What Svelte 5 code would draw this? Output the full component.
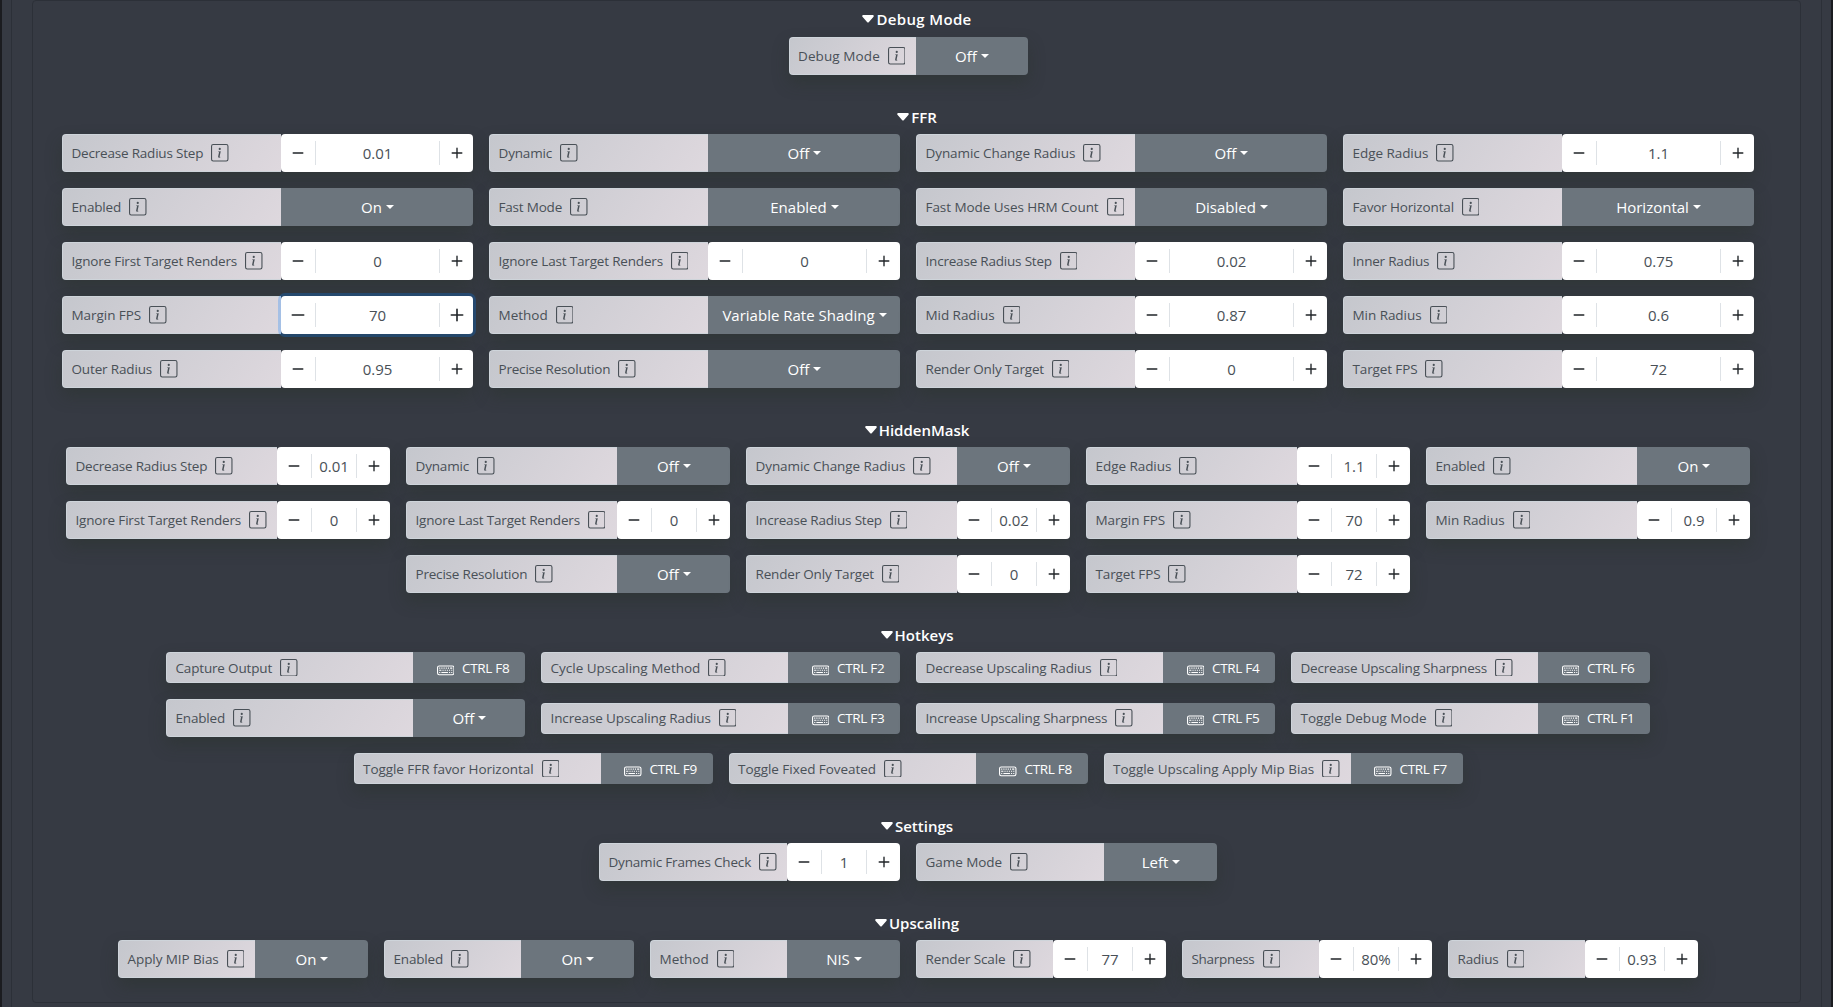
<script>
  const off = (label) => ({ label, kind: 'select', value: 'Off' });
  const select = (label, value) => ({ label, kind: 'select', value });
  const num = (label, value) => ({ label, kind: 'spin', value });
  const key = (label, value) => ({ label, kind: 'key', value });

  // Letter spacing per label, in pixels
  const tracking = {
    'Debug Mode': 0.1,
    'Decrease Radius Step': -0.2,
    'Dynamic': -0.17,
    'Dynamic Change Radius': -0.08,
    'Edge Radius': -0.05,
    'Enabled': -0.17,
    'Fast Mode': -0.2,
    'Fast Mode Uses HRM Count': -0.06,
    'Favor Horizontal': -0.15,
    'Ignore First Target Renders': -0.18,
    'Ignore Last Target Renders': -0.18,
    'Increase Radius Step': -0.2,
    'Inner Radius': -0.2,
    'Margin FPS': -0.05,
    'Mid Radius': -0.05,
    'Min Radius': -0.05,
    'Outer Radius': -0.15,
    'Precise Resolution': -0.2,
    'Render Only Target': -0.18,
    'Target FPS': -0.12,
    'Capture Output': -0.17,
    'Decrease Upscaling Radius': -0.1,
    'Decrease Upscaling Sharpness': -0.2,
    'Increase Upscaling Radius': -0.12,
    'Increase Upscaling Sharpness': -0.18,
    'Toggle Debug Mode': 0.03,
    'Toggle FFR favor Horizontal': -0.05,
    'Toggle Fixed Foveated': -0.05,
    'Dynamic Frames Check': -0.18,
    'Game Mode': -0.05,
    'Apply MIP Bias': -0.08,
    'Render Scale': -0.12,
    'Sharpness': -0.3,
    'Radius': -0.2
  };

  const sections = [
    { title: 'Debug Mode', titleTracking: 0.35, labelWidth: 127, controlWidth: 112, rows: [[off('Debug Mode')]] },
    {
      title: 'FFR', labelWidth: 219, controlWidth: 192,
      rows: [
        [num('Decrease Radius Step', '0.01'), off('Dynamic'), off('Dynamic Change Radius'), num('Edge Radius', '1.1')],
        [select('Enabled', 'On'), select('Fast Mode', 'Enabled'), select('Fast Mode Uses HRM Count', 'Disabled'), select('Favor Horizontal', 'Horizontal')],
        [num('Ignore First Target Renders', '0'), num('Ignore Last Target Renders', '0'), num('Increase Radius Step', '0.02'), num('Inner Radius', '0.75')],
        [{ ...num('Margin FPS', '70'), focused: true }, select('Method', 'Variable Rate Shading'), num('Mid Radius', '0.87'), num('Min Radius', '0.6')],
        [num('Outer Radius', '0.95'), off('Precise Resolution'), num('Render Only Target', '0'), num('Target FPS', '72')]
      ]
    },
    {
      title: 'HiddenMask', labelWidth: 211, controlWidth: 113,
      rows: [
        [num('Decrease Radius Step', '0.01'), off('Dynamic'), off('Dynamic Change Radius'), num('Edge Radius', '1.1'), select('Enabled', 'On')],
        [num('Ignore First Target Renders', '0'), num('Ignore Last Target Renders', '0'), num('Increase Radius Step', '0.02'), num('Margin FPS', '70'), num('Min Radius', '0.9')],
        [off('Precise Resolution'), num('Render Only Target', '0'), num('Target FPS', '72')]
      ]
    },
    {
      title: 'Hotkeys', labelWidth: 247, controlWidth: 112,
      rows: [
        [key('Capture Output', 'CTRL F8'), key('Cycle Upscaling Method', 'CTRL F2'), key('Decrease Upscaling Radius', 'CTRL F4'), key('Decrease Upscaling Sharpness', 'CTRL F6')],
        [off('Enabled'), key('Increase Upscaling Radius', 'CTRL F3'), key('Increase Upscaling Sharpness', 'CTRL F5'), key('Toggle Debug Mode', 'CTRL F1')],
        [key('Toggle FFR favor Horizontal', 'CTRL F9'), key('Toggle Fixed Foveated', 'CTRL F8'), key('Toggle Upscaling Apply Mip Bias', 'CTRL F7')]
      ]
    },
    { title: 'Settings', labelWidth: 188, controlWidth: 113, rows: [[num('Dynamic Frames Check', '1'), select('Game Mode', 'Left')]] },
    {
      title: 'Upscaling', labelWidth: 137, controlWidth: 113,
      rows: [[select('Apply MIP Bias', 'On'), select('Enabled', 'On'), select('Method', 'NIS'), num('Render Scale', '77'), num('Sharpness', '80%'), num('Radius', '0.93')]]
    }
  ];
</script>

<div class="window">
  <div class="tab">
    <main class="panel">
      {#each sections as s}
        <section>
          <h2>
            <svg width="16" height="16" viewBox="0 0 16 16"><path d="M7.247 11.14 2.451 5.658C1.885 5.013 2.345 4 3.204 4h9.592a1 1 0 0 1 .753 1.659l-4.796 5.48a1 1 0 0 1-1.506 0z" /></svg><span style:letter-spacing="{s.titleTracking ?? 0}px">{s.title}</span>
          </h2>
          {#each s.rows as row}
            <div class="row">
              {#each row as item}
                <div class="item {item.kind}">
                  <div class="label" style:width="{s.labelWidth}px">
                    <span style:letter-spacing="{tracking[item.label] ?? 0}px">{item.label}</span>
                    <svg class="info" viewBox="0 0 16 16">
                      <path d="M14 1a1 1 0 0 1 1 1v12a1 1 0 0 1-1 1H2a1 1 0 0 1-1-1V2a1 1 0 0 1 1-1h12zM2 0a2 2 0 0 0-2 2v12a2 2 0 0 0 2 2h12a2 2 0 0 0 2-2V2a2 2 0 0 0-2-2H2z" />
                      <path d="M8.93 6.588l-2.29.287-.082.38.45.083c.294.07.352.176.288.469l-.738 3.468c-.194.897.105 1.319.808 1.319.545 0 1.178-.252 1.465-.598l.088-.416c-.2.176-.492.246-.686.246-.275 0-.375-.193-.304-.533L8.93 6.588zM9 4.5a1 1 0 1 1-2 0 1 1 0 0 1 2 0z" />
                    </svg>
                  </div>
                  {#if item.kind === 'spin'}
                    <div class="control spinner" class:focused={item.focused} style:width="{s.controlWidth}px">
                      <button aria-label="Decrement"><svg viewBox="0 0 16 16"><path d="M4 8a.5.5 0 0 1 .5-.5h7a.5.5 0 0 1 0 1h-7A.5.5 0 0 1 4 8z" /></svg></button>
                      <output>{item.value}</output>
                      <button aria-label="Increment"><svg viewBox="0 0 16 16"><path d="M8 4a.5.5 0 0 1 .5.5v3h3a.5.5 0 0 1 0 1h-3v3a.5.5 0 0 1-1 0v-3h-3a.5.5 0 0 1 0-1h3v-3A.5.5 0 0 1 8 4z" /></svg></button>
                    </div>
                  {:else if item.kind === 'select'}
                    <button class="control dropdown" style:width="{s.controlWidth}px"><span>{item.value}</span><i></i></button>
                  {:else}
                    <button class="control hotkey" style:width="{s.controlWidth}px">
                      <svg viewBox="0 0 16 16">
                        <path d="M14 5a1 1 0 0 1 1 1v5a1 1 0 0 1-1 1H2a1 1 0 0 1-1-1V6a1 1 0 0 1 1-1h12zM2 4a2 2 0 0 0-2 2v5a2 2 0 0 0 2 2h12a2 2 0 0 0 2-2V6a2 2 0 0 0-2-2H2z" />
                        <path d="M2 6h1v1H2zM4 6h1v1H4zM6 6h1v1H6zM8 6h1v1H8zM10 6h1v1h-1zM12 6h2v1h-2zM2 8h2v1H2zM5 8h1v1H5zM7 8h1v1H7zM9 8h1v1H9zM11 8h1v1h-1zM13 8h1v1h-1zM2 10h1v1H2zM4 10h6v1H4zM11 10h1v1h-1zM13 10h1v1h-1z" />
                      </svg>
                      <span>{item.value}</span>
                    </button>
                  {/if}
                </div>
              {/each}
            </div>
          {/each}
        </section>
      {/each}
    </main>
  </div>
</div>

<style>
  :global(body) {
    background: #1b1c20;
    overflow: hidden;
  }
  .window {
    box-sizing: border-box;
    height: 1007px;
    margin: 0 2px;
    padding: 0 9px;
    background: #363a43;
    font-family: 'Open Sans', 'Noto Sans', sans-serif;
  }
  .tab {
    box-sizing: border-box;
    height: 1007px;
    padding: 0 20px;
    border: solid #2c3038;
    border-width: 0 1px;
  }
  .panel {
    box-sizing: border-box;
    height: 1003px;
    padding-top: 6px;
    border: 1px solid #2c3038;
    border-radius: 4px;
  }
  section {
    margin-bottom: 30px;
  }
  h2 {
    display: flex;
    justify-content: center;
    align-items: center;
    height: 24px;
    margin: 0 1px 5px 0;
    color: #fff;
    font-size: 15px;
    font-weight: 600;
    line-height: 24px;
  }
  section:first-child h2 {
    margin-bottom: 6px;
  }
  h2 svg {
    fill: #fff;
  }
  .row {
    display: flex;
    justify-content: center;
    align-items: center;
    gap: 16px;
    margin-left: -1px;
    margin-right: 16px;
  }
  .row + .row {
    margin-top: 16px;
  }
  .item {
    display: flex;
    height: 38px;
    border-radius: 4px;
    box-shadow: 0 8px 16px rgba(40, 50, 40, 0.4);
  }
  .item.key {
    height: 31px;
  }
  .label {
    box-sizing: border-box;
    display: flex;
    align-items: center;
    gap: 8px;
    padding-left: 8.5px;
    border: 1px solid #ced4da;
    border-right: 0;
    border-radius: 4px 0 0 4px;
    background: linear-gradient(125deg, #c5c7cd, #ded8de);
    color: #495057;
    font-size: 13.5px;
    line-height: 21px;
    white-space: nowrap;
  }
  .key .label span {
    padding-top: 1px;
  }
  .info {
    width: 17.5px;
    height: 17.5px;
    flex: none;
    fill: #495057;
  }
  .control {
    box-sizing: border-box;
    display: flex;
    align-items: center;
    border: 0;
    font-family: inherit;
    font-size: 15px;
    white-space: nowrap;
  }
  .dropdown,
  .hotkey {
    justify-content: center;
    padding: 0;
    border-radius: 0 4px 4px 0;
    background: #6c757d;
    color: #fff;
  }
  .dropdown {
    padding-left: 1px;
  }
  .dropdown i {
    margin: -1px 0 0 4px;
    border: 4px solid transparent;
    border-top-color: #fff;
    border-bottom: 0;
  }
  .hotkey {
    justify-content: flex-start;
    gap: 8px;
    padding-left: 23.5px;
    font-size: 13.5px;
    letter-spacing: -0.3px;
  }
  .hotkey svg {
    width: 17.5px;
    height: 17.5px;
    margin-top: 4px;
    fill: #fff;
  }
  .spinner {
    border-radius: 4px;
    background: #fff;
    color: #495057;
  }
  .spinner.focused {
    box-shadow: 0 0 0 3px rgba(0, 123, 255, 0.25);
    z-index: 1;
  }
  .spinner button {
    display: flex;
    justify-content: center;
    align-items: center;
    width: 34px;
    height: 36px;
    padding: 0;
    border: 0;
    background: none;
  }
  .spinner output + button {
    width: 33px;
  }
  .spinner svg {
    width: 22px;
    height: 22px;
    flex: none;
    fill: #212529;
  }
  .spinner.focused svg {
    width: 26px;
    height: 26px;
  }
  output {
    box-sizing: border-box;
    flex: 1;
    height: 24px;
    border: solid #dee2e6;
    border-width: 0 1px;
    line-height: 24px;
    text-align: center;
  }
</style>
